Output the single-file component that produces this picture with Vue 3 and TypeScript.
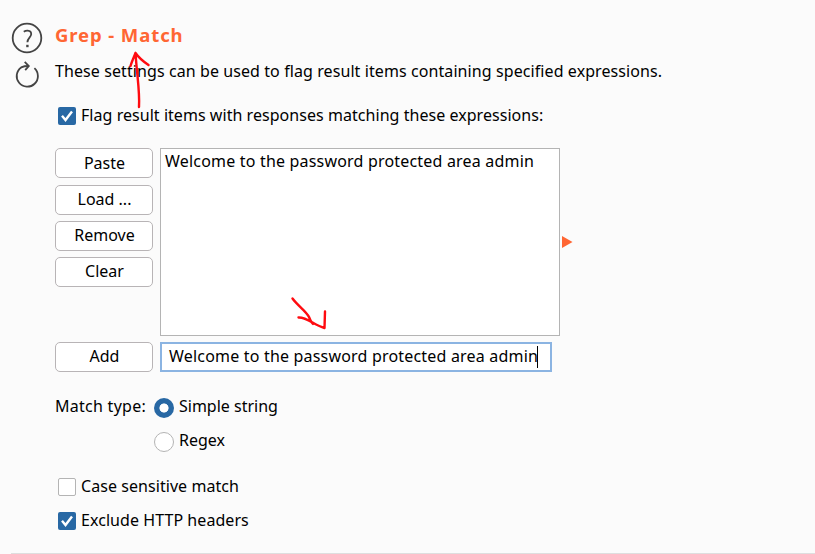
<script setup lang="ts">
import { ref } from 'vue'

const actions: string[] = ['Paste', 'Load ...', 'Remove', 'Clear']
const expressions = ref<string[]>(['Welcome to the password protected area admin'])
const draft = ref('Welcome to the password protected area admin')
const matchType = ref<'simple' | 'regex'>('simple')
const flagItems = ref(true)
const caseSensitive = ref(false)
const excludeHeaders = ref(true)

function addExpression(): void {
  if (draft.value) expressions.value.push(draft.value)
}
</script>

<template>
  <main class="panel">
    <aside class="tools">
      <svg class="help" width="32" height="32" viewBox="0 0 32 32">
        <circle cx="16" cy="16" r="14.3" />
        <path d="M12.800 9.800C14 8.900 15.200 8.500 16.700 8.600C18.900 8.800 20.300 10.100 20.200 12.200C20 15.400 16.400 16 16.400 20.300" />
        <path class="dot" d="M15.200 22.800h2.400v2.400h-2.400z" />
      </svg>
      <svg class="reset" width="28" height="30" viewBox="0 0 28 30">
        <path d="M21.400 8.200A10.600 10.600 0 1 1 8.200 7.400C10.500 6.300 12.500 6 15.600 6" />
        <path d="M11.700 1.800L15.800 6L12.200 10.200" />
      </svg>
    </aside>
    <section class="content">
      <h1>Grep - Match</h1>
      <p class="description">These settings can be used to flag result items containing specified expressions.</p>
      <label class="check flag" @click="flagItems = !flagItems">
        <span class="box" :class="{ on: flagItems }">
          <svg v-if="flagItems" viewBox="0 0 18 18"><path d="M4 8.800L7.500 13L14 4.500" /></svg>
        </span>
        <span>Flag result items with responses matching these expressions:</span>
      </label>
      <div class="editor">
        <div class="buttons">
          <button v-for="name in actions" :key="name" type="button">{{ name }}</button>
        </div>
        <div class="list">
          <div v-for="(item, i) in expressions" :key="i" class="expression">{{ item }}</div>
        </div>
        <svg class="expand" width="11" height="12" viewBox="0 0 11 12"><path d="M0 0L10.5 6L0 12Z" /></svg>
      </div>
      <div class="entry">
        <button type="button" @click="addExpression">Add</button>
        <div class="field"><span class="expression">{{ draft }}</span><i class="caret"></i></div>
      </div>
      <div class="match">
        <span class="match-label">Match type:</span>
        <div class="choices">
          <label class="choice" @click="matchType = 'simple'">
            <span class="radio" :class="{ on: matchType === 'simple' }"></span><span>Simple string</span>
          </label>
          <label class="choice" @click="matchType = 'regex'">
            <span class="radio" :class="{ on: matchType === 'regex' }"></span><span>Regex</span>
          </label>
        </div>
      </div>
      <label class="check case" @click="caseSensitive = !caseSensitive">
        <span class="box" :class="{ on: caseSensitive }">
          <svg v-if="caseSensitive" viewBox="0 0 18 18"><path d="M4 8.800L7.500 13L14 4.500" /></svg>
        </span>
        <span>Case sensitive match</span>
      </label>
      <label class="check last" @click="excludeHeaders = !excludeHeaders">
        <span class="box" :class="{ on: excludeHeaders }">
          <svg v-if="excludeHeaders" viewBox="0 0 18 18"><path d="M4 8.800L7.500 13L14 4.500" /></svg>
        </span>
        <span>Exclude HTTP headers</span>
      </label>
    </section>
    <hr />
    <svg class="marks" width="815" height="554" viewBox="0 0 815 554">
      <path d="M139 107C140 92 137 76 135.500 53M130.500 66C132 61 134 57 135.500 53C139 58 144 62 148.500 65" />
      <path d="M292.500 298.500C298 306 306 311 309 317C310 320 311 322 313 324M298.500 317.500C307 317 314 325 324.500 328L325 311.500" />
    </svg>
  </main>
</template>

<style>
body {
  margin: 0;
  background: #fbfbfb;
}
</style>

<style scoped>
.panel {
  position: relative;
  display: flex;
  box-sizing: border-box;
  width: 815px;
  height: 554px;
  overflow: hidden;
  background: #fbfbfb;
  color: #000;
  font: 16px/24px "Noto Sans", "Open Sans", sans-serif;
  white-space: nowrap;
}
.tools {
  display: flex;
  flex-direction: column;
  width: 44px;
  padding: 22px 0 0 11px;
  flex: none;
  box-sizing: border-box;
}
.tools svg {
  fill: none;
  stroke: #444;
  stroke-width: 1.8;
}
.tools .dot {
  fill: #444;
  stroke: none;
}
.reset {
  margin: 6px 0 0 2px;
}
.content {
  margin-left: 11px;
  padding-top: 23px;
}
h1 {
  margin: 0;
  color: #ff6633;
  font-size: 18.5px;
  line-height: 24px;
  font-weight: 700;
  letter-spacing: 0.9px;
}
.description {
  margin: 12px 0 0;
  letter-spacing: 0.088px;
}
.check {
  display: flex;
  align-items: center;
  gap: 5px;
  height: 24px;
  margin: 22px 0 0 3px;
  letter-spacing: 0.06px;
}
.check.flag {
  margin-top: 20px;
  letter-spacing: 0.045px;
}
.check.last {
  margin-top: 10px;
}
.box {
  box-sizing: border-box;
  width: 18px;
  height: 18px;
  margin-top: 2px;
  border: 1px solid #b4b4b4;
  border-radius: 2px;
  background: #fff;
}
.box.on {
  border: 0;
  background: #2868a4;
}
.box svg {
  display: block;
  fill: none;
  stroke: #fff;
  stroke-width: 2.4;
}
.editor {
  display: flex;
  align-items: flex-start;
  margin-top: 21px;
}
.buttons {
  display: flex;
  flex-direction: column;
  gap: 6px;
}
button {
  box-sizing: border-box;
  width: 98px;
  height: 30px;
  padding: 0 0 2px 1px;
  border: 1px solid #b8b4b6;
  border-radius: 5px;
  background: #fff;
  color: #000;
  font: inherit;
  line-height: 26px;
}
.buttons button:first-child {
  margin-bottom: 1px;
  padding-bottom: 0;
  line-height: 28px;
}
.list {
  box-sizing: border-box;
  width: 400px;
  height: 188px;
  margin-left: 7px;
  padding-left: 4px;
  border: 1px solid #b4b4b4;
  background: #fff;
}
.expression {
  letter-spacing: 0.19px;
}
.expand {
  margin: 88px 0 0 2px;
  fill: #ff6633;
}
.entry {
  display: flex;
  gap: 7px;
  margin-top: 6px;
}
.field {
  display: flex;
  align-items: center;
  box-sizing: border-box;
  width: 392px;
  height: 30px;
  padding: 0 0 2px 7px;
  border: 2px solid #8bb4e2;
  background: #fff;
}
.caret {
  width: 1px;
  height: 22px;
  margin: 2px 0 0 -1px;
  background: #000;
}
.match {
  display: flex;
  margin-top: 22px;
}
.match-label {
  width: 99px;
  letter-spacing: 0.27px;
}
.choices {
  display: flex;
  flex-direction: column;
  gap: 10px;
}
.choice {
  display: flex;
  align-items: center;
  gap: 5px;
  height: 24px;
}
.radio {
  box-sizing: border-box;
  width: 20px;
  height: 20px;
  margin-top: 3px;
  border: 1px solid #b4b4b4;
  border-radius: 50%;
  background: #fff;
}
.radio.on {
  border: 0;
  background: radial-gradient(circle, #fff 4.2px, #2868a4 4.900px);
}
hr {
  position: absolute;
  left: 11px;
  right: 0;
  bottom: 0;
  height: 1px;
  margin: 0;
  border: 0;
  background: #dedede;
}
.marks {
  position: absolute;
  inset: 0;
  pointer-events: none;
  fill: none;
  stroke: #ff0b10;
  stroke-width: 2.4;
  stroke-linecap: round;
  stroke-linejoin: round;
}
</style>
